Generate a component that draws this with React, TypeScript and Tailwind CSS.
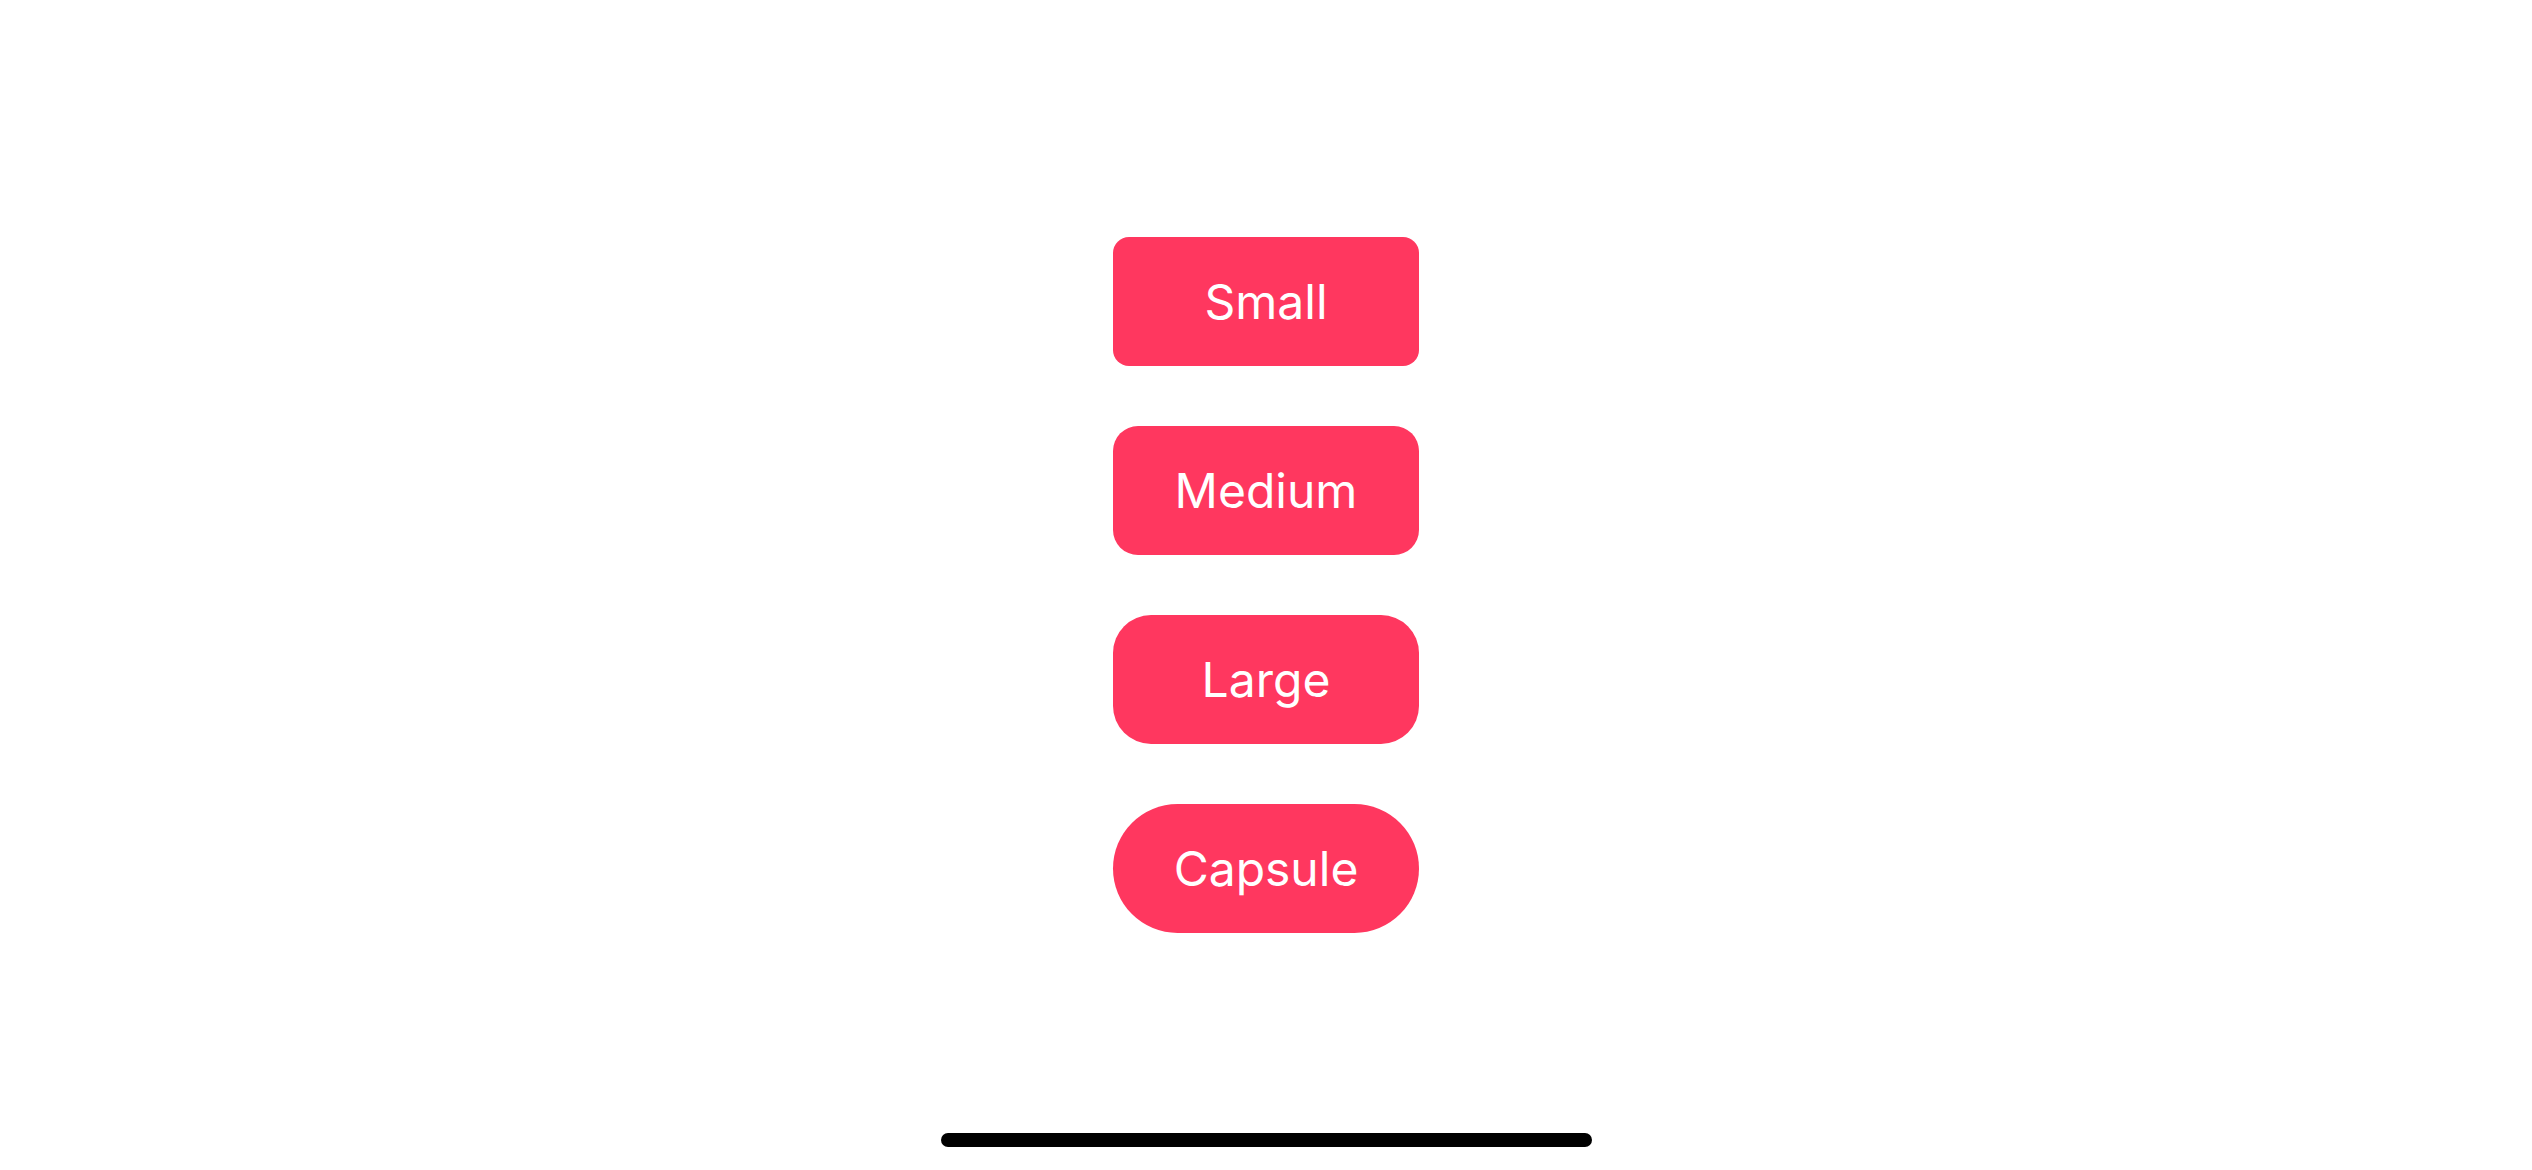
import React from 'react';

const buttons = [
  { label: 'Small', radius: 'rounded-[16px]' },
  { label: 'Medium', radius: 'rounded-[25px]' },
  { label: 'Large', radius: 'rounded-[38px]' },
  { label: 'Capsule', radius: 'rounded-full' },
];

export default function App() {
  return (
    <div
      className="relative flex h-[1170px] w-[2532px] flex-col items-center bg-white"
      style={{ fontFamily: 'Inter, "Noto Sans", sans-serif' }}
    >
      {/* Buttons */}
      <div className="mt-[237px] flex flex-col items-center gap-[60px]">
        {buttons.map((b) => (
          <button
            key={b.label}
            className={`flex h-[129px] w-[306px] items-center justify-center bg-[#ff375f] text-[48px] font-normal text-white ${b.radius}`}
          >
            {b.label}
          </button>
        ))}
      </div>

      {/* Home indicator */}
      <div className="mt-auto mb-[23px] h-[14px] w-[651px] rounded-full bg-black" />
    </div>
  );
}
